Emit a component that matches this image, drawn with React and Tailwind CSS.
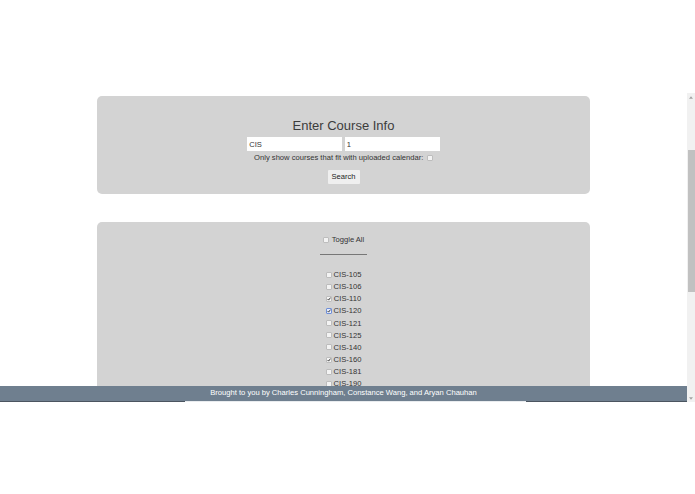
import React from 'react';

const courses = [
  { id: 'CIS-105', checked: false },
  { id: 'CIS-106', checked: false },
  { id: 'CIS-110', checked: true },
  { id: 'CIS-120', checked: true, focused: true },
  { id: 'CIS-121', checked: false },
  { id: 'CIS-125', checked: false },
  { id: 'CIS-140', checked: false },
  { id: 'CIS-160', checked: true },
  { id: 'CIS-181', checked: false },
  { id: 'CIS-190', checked: false },
];

// tiny checkbox drawn with css, native ones don't shrink this far
const Box = ({ checked, focused }) => (
  <span
    className={
      focused
        ? 'w-[6px] h-[6px] shrink-0 rounded-[1px] border border-[#6f8fd8] bg-[#e8eefb] flex items-center justify-center'
        : 'w-[6px] h-[6px] shrink-0 rounded-[1px] border border-[#bdbdbd] bg-[#f3f3f3] flex items-center justify-center'
    }
  >
    {checked && (
      <svg viewBox="0 0 10 10" className="w-[6px] h-[6px]">
        <path d="M1.5 5.2 L4 7.8 L8.8 1.5" fill="none" stroke="#111" strokeWidth="2" />
      </svg>
    )}
  </span>
);

const App = () => {
  return (
    <div className="w-[695px] h-[494px] bg-white flex flex-col font-['Liberation_Sans',Arial,sans-serif]">
      <div className="h-[93px] shrink-0" />

      <div className="h-[309px] flex shrink-0">
        <div className="flex-1 flex flex-col">
          {/* page body */}
          <main className="flex-1 overflow-hidden pt-[3px]">
            {/* search form */}
            <section className="mx-auto w-[493px] h-[98px] rounded-[5px] bg-[#d3d3d3] flex flex-col items-center pt-[22px]">
              <h2 className="text-[13px] leading-[15px] text-[#3c3c3c]">Enter Course Info</h2>
              <div className="flex gap-[2.5px] mt-[4px]">
                <input
                  readOnly
                  value="CIS"
                  className="w-[95px] h-[14px] bg-white px-[2px] text-[7.6px] text-[#333] outline-none"
                />
                <input
                  readOnly
                  value="1"
                  className="w-[95px] h-[14px] bg-white px-[2px] text-[7.6px] text-[#333] outline-none"
                />
              </div>
              <div className="flex items-center gap-[3.5px] mt-[2px] h-[9px]">
                <span className="text-[7.6px] leading-[9px] text-[#333]">
                  Only show courses that fit with uploaded calendar:
                </span>
                <Box />
              </div>
              <button className="mt-[8px] w-[32px] h-[14px] rounded-[1px] bg-[#efefef] text-[7.6px] text-[#222] flex items-center justify-center">
                Search
              </button>
            </section>

            {/* course list */}
            <section className="mx-auto mt-[28px] w-[493px] rounded-[5px] bg-[#d3d3d3] flex flex-col items-center pt-[13px] pb-[20px]">
              <div className="flex items-center gap-[3px] h-[9px]">
                <Box />
                <span className="text-[7.6px] leading-[9px] text-[#333]">Toggle All</span>
              </div>
              <div className="mt-[10px] w-[47px] h-[1px] bg-[#777]" />
              <ul className="mt-[13.5px] flex flex-col items-center">
                {courses.map((c) => (
                  <li key={c.id} className="h-[12.15px] flex items-center gap-[2px]">
                    <Box checked={c.checked} focused={c.focused} />
                    <span className="text-[7.6px] leading-[9px] text-[#333]">{c.id}</span>
                  </li>
                ))}
              </ul>
            </section>
          </main>

          <footer className="h-[15px] shrink-0 bg-[#6f7f8f] flex justify-center pt-[1.5px]">
            <span className="text-[7.6px] leading-[9px] text-white">
              Brought to you by Charles Cunningham, Constance Wang, and Aryan Chauhan
            </span>
          </footer>
          <div className="h-[1px] shrink-0 flex">
            <div className="w-[185px] bg-[#4b5560]" />
            <div className="w-[341px] bg-[#e9ecef]" />
            <div className="flex-1 bg-[#4b5560]" />
          </div>
        </div>

        {/* scrollbar */}
        <div className="w-[8px] bg-[#f1f1f1] flex flex-col">
          <div className="h-[8px] flex items-center justify-center">
            <svg viewBox="0 0 6 4" className="w-[4px] h-[3px]">
              <path d="M0 4 L3 0 L6 4 Z" fill="#a3a3a3" />
            </svg>
          </div>
          <div className="h-[49px]" />
          <div className="h-[142px] mx-[0.5px] bg-[#c1c1c1]" />
          <div className="flex-1" />
          <div className="h-[8px] flex items-center justify-center">
            <svg viewBox="0 0 6 4" className="w-[4px] h-[3px]">
              <path d="M0 0 L6 0 L3 4 Z" fill="#a3a3a3" />
            </svg>
          </div>
        </div>
      </div>
    </div>
  );
};

export default App;
